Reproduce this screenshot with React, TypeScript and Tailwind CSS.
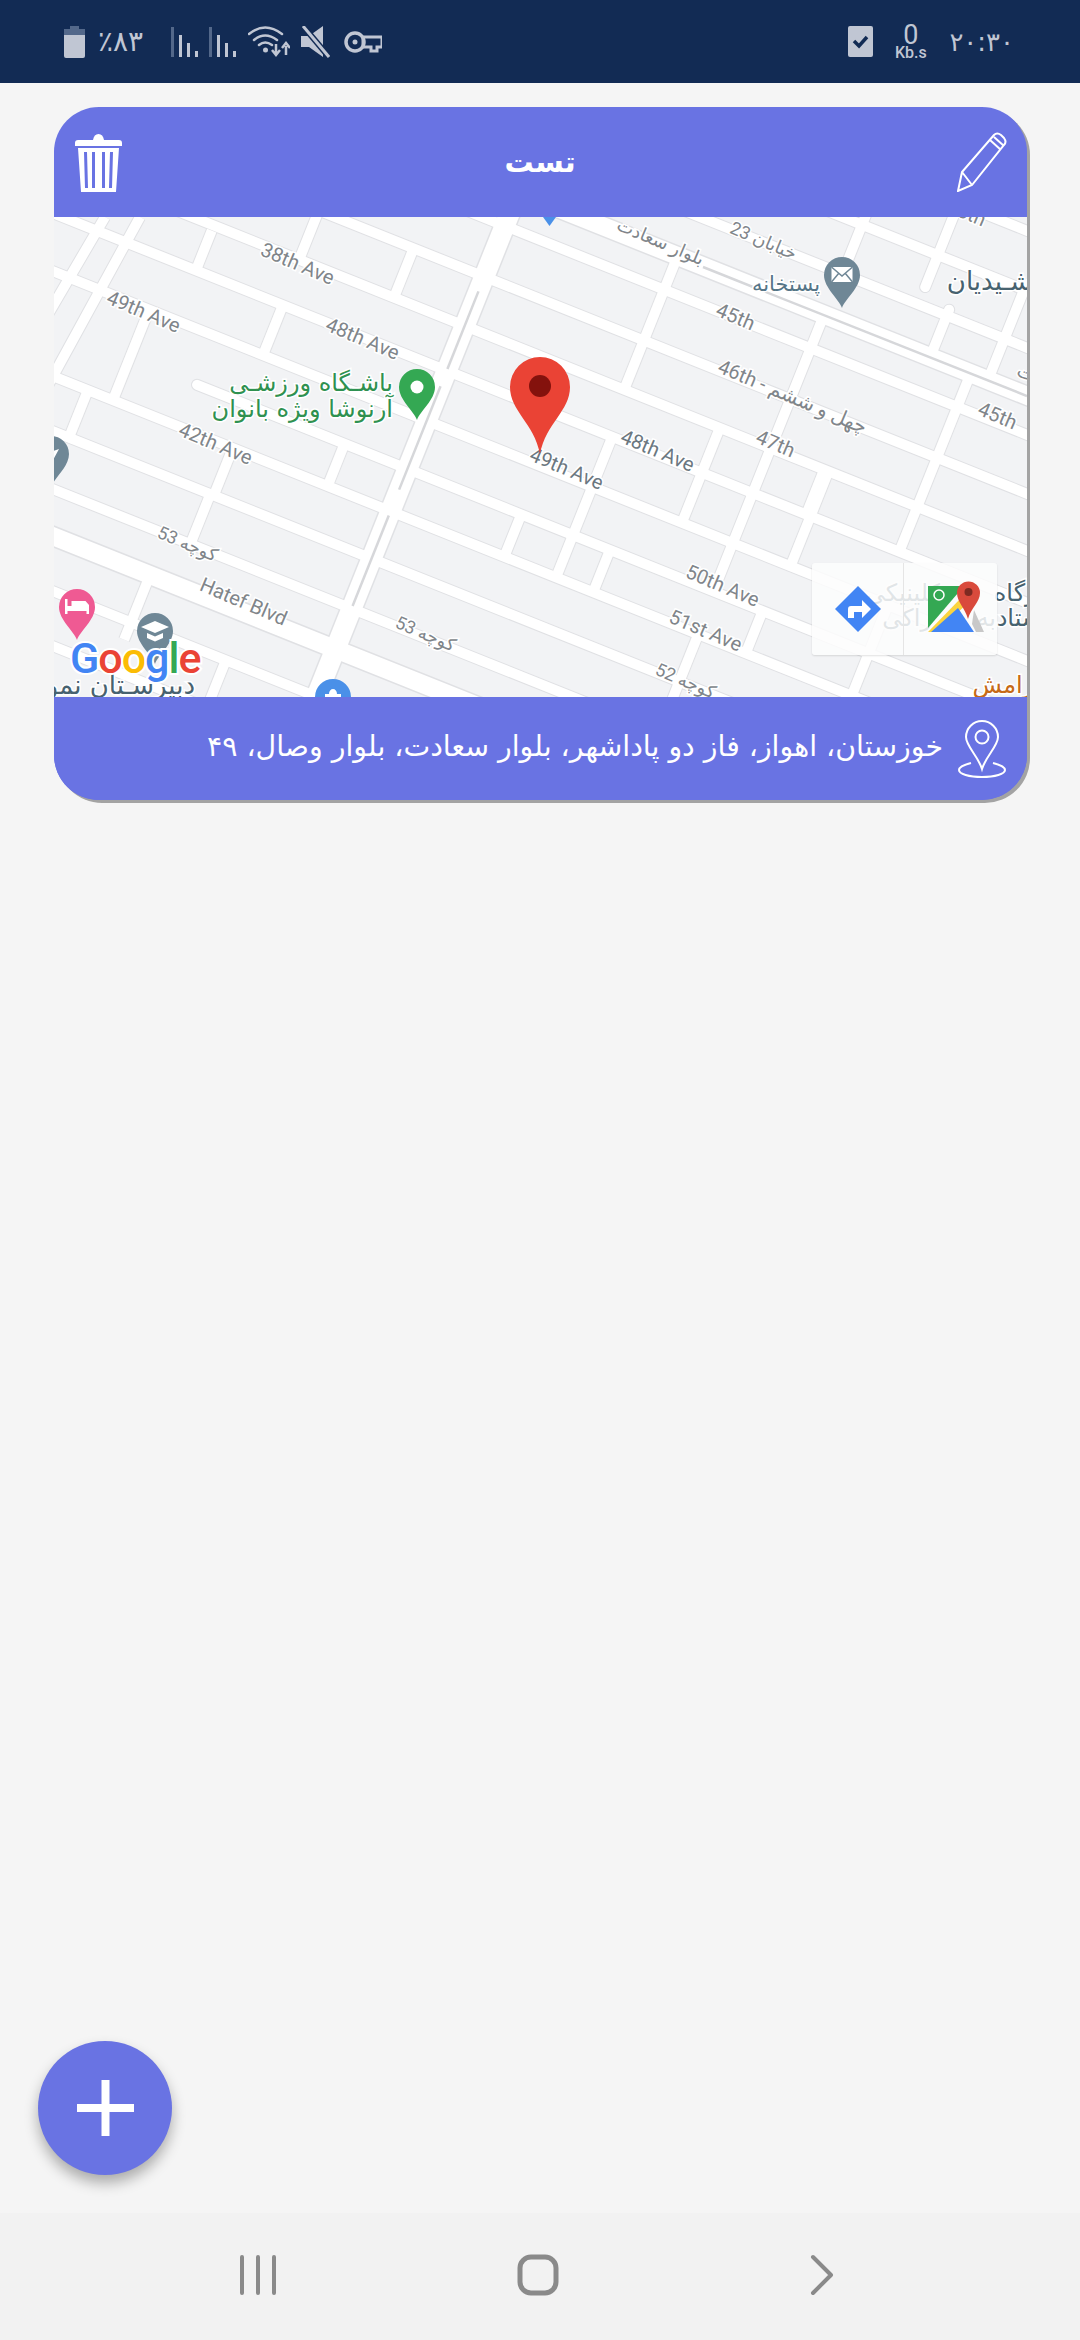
const fa = { fontFamily: '"DejaVu Sans", "Noto Sans", sans-serif' }

// long roads run at y = c + 0.4x, cross roads at x = d - 0.4y
const pt = (d: number, c: number) => {
  const x = (d - 0.4 * c) / 1.16
  return { x, y: c + 0.4 * x }
}

const longRoads = [-180, -120, -63, 24, 83, 140, 192, 250, 355, 410, 468, 570, 625, 680]
const crossRoads: [number, number, number][] = [
  [304, 146, 192], [403, 83, 140], [513, 83, 140], [405, 192, 250], [273, 250, 355],
  [244, 355, 415], [412, 355, 410], [522, 306, 355], [780, -15, 140], [787, 192, 355],
  [891, 140, 250], [950, -15, 306], [952, 355, 430], [952, -190, -63], [1140, -130, -15],
  [1120, -15, 192], [1130, 250, 355], [1012, 140, 192], [1017, 140, 250], [1007, 306, 355],
  [830, 306, 355], [727, 306, 355], [380, 515, 590], [408, 410, 468], [490, 570, 630],
]
const deadEnds: [number, number, number][] = [[1040, -200, -83], [1073, -70, -15]]

const streetLabels: [string, number, number, string?][] = [
  ['38th Ave', 297, 265], ['49th Ave', 143, 313], ['48th Ave', 362, 340], ['42th Ave', 215, 445],
  ['49th Ave', 566, 470, '#6b7780'], ['48th Ave', 657, 452, '#6b7780'], ['45th', 735, 318],
  ['47th', 775, 445], ['45th', 997, 417], ['Hatef Blvd', 243, 603], ['50th Ave', 722, 587],
  ['51st Ave', 705, 632], ['46th - چهل و ششم', 792, 398], ['بلوار سعادت', 660, 243],
  ['خیابان 23', 763, 242], ['کوچه 53', 187, 545], ['کوچه 53', 425, 635], ['کوچه 52', 685, 682],
  ['45th', 966, 214], ['بلوار سعادت', 1060, 389],
]

function Pin({ x, y, color, children }: { x: number; y: number; color: string; children?: React.ReactNode }) {
  return (
    <g transform={`translate(${x} ${y})`}>
      <path d="M0 33C-3 24-18 13-18 0a18 18 0 0 1 36 0C18 13 3 24 0 33z" fill={color} />
      {children}
    </g>
  )
}

function MapDrawing() {
  return (
    <svg viewBox="54 217 973 480" className="absolute inset-0 w-full h-full">
      <rect x="54" y="217" width="973" height="480" fill="#f2f3f5" />
      {/* block outlines */}
      <g stroke="#e0e1e4" strokeWidth="12">
        {longRoads.map((c) => (
          <line key={c} x1="0" y1={c} x2="1100" y2={c + 440} />
        ))}
        {crossRoads.map(([d, a, b], i) => (
          <line key={i} x1={pt(d, a).x} y1={pt(d, a).y} x2={pt(d, b).x} y2={pt(d, b).y} />
        ))}
        <line x1={pt(351, 306).x} y1={pt(351, 306).y} x2="1100" y2="746" strokeLinecap="round" />
        <path d="M140 217L40 400M105 217L30 345" fill="none" />
        {deadEnds.map(([d, a, b], i) => (
          <line key={i} x1={pt(d, a).x} y1={pt(d, a).y} x2={pt(d, b).x} y2={pt(d, b).y} strokeLinecap="round" />
        ))}
        <line x1="0" y1="-15" x2="1100" y2="425" strokeWidth="21" />
        <line x1="0" y1="515" x2="1100" y2="955" strokeWidth="21" />
        <line x1={pt(595, -60).x} y1={pt(595, -60).y} x2={pt(595, 720).x} y2={pt(595, 720).y} strokeWidth="23" />
      </g>
      <g stroke="#ffffff" strokeWidth="10">
        {longRoads.map((c) => (
          <line key={c} x1="0" y1={c} x2="1100" y2={c + 440} />
        ))}
        {crossRoads.map(([d, a, b], i) => (
          <line key={i} x1={pt(d, a).x} y1={pt(d, a).y} x2={pt(d, b).x} y2={pt(d, b).y} />
        ))}
        <line x1={pt(351, 306).x} y1={pt(351, 306).y} x2="1100" y2="746" strokeLinecap="round" />
        <path d="M140 217L40 400M105 217L30 345" fill="none" />
        {deadEnds.map(([d, a, b], i) => (
          <line key={i} x1={pt(d, a).x} y1={pt(d, a).y} x2={pt(d, b).x} y2={pt(d, b).y} strokeLinecap="round" />
        ))}
        <line x1="0" y1="-15" x2="1100" y2="425" strokeWidth="18" />
        <line x1="0" y1="515" x2="1100" y2="955" strokeWidth="18" />
        <line x1={pt(595, -60).x} y1={pt(595, -60).y} x2={pt(595, 720).x} y2={pt(595, 720).y} strokeWidth="20" />
      </g>
      {/* road dividers */}
      <g stroke="#d6d7da" strokeWidth="2.5">
        <line x1="703" y1="267" x2="1027" y2="396" />
        <line x1={pt(595, 100).x} y1={pt(595, 100).y} x2={pt(595, 190).x} y2={pt(595, 190).y} />
        <line x1={pt(595, 210).x} y1={pt(595, 210).y} x2={pt(595, 330).x} y2={pt(595, 330).y} />
        <line x1={pt(595, 360).x} y1={pt(595, 360).y} x2={pt(595, 465).x} y2={pt(595, 465).y} />
      </g>

      {/* street names */}
      {streetLabels.map(([t, x, y, color], i) => (
        <text
          key={i}
          transform={`translate(${x} ${y}) rotate(23)`}
          textAnchor="middle"
          dominantBaseline="middle"
          fontSize={/[a-z]/i.test(t) ? 20 : 18}
          fontFamily={'Roboto, "DejaVu Sans", sans-serif'}
          fill={color ?? '#80858a'}
          stroke="#ffffff"
          strokeWidth="3"
          paintOrder="stroke"
        >
          {t}
        </text>
      ))}

      {/* places */}
      <g fontFamily={'"DejaVu Sans", sans-serif'} textAnchor="end" stroke="#ffffff" strokeWidth="3" paintOrder="stroke">
        <text x="393" y="391" fontSize="24" fill="#2f9150">باشـگاه ورزشـی</text>
        <text x="393" y="417" fontSize="24" fill="#2f9150">آرنوشا ویژه بانوان</text>
        <text x="820" y="291" fontSize="21" fill="#557587">پستخانه</text>
        <text x="1032" y="290" fontSize="26" fill="#47626f">شـیدیان</text>
        <text x="1045" y="601" fontSize="24" fill="#47626f">برگاه</text>
        <text x="1042" y="626" fontSize="24" fill="#47626f">ستاد</text>
        <text x="195" y="694" fontSize="26" fill="#47626f">دبیرسـتان نمونه</text>
        <text x="1041" y="693" fontSize="24" fill="#c66a17">آرامش</text>
        <text x="940" y="601" fontSize="24" fill="#47626f">کلینیکی</text>
        <text x="932" y="626" fontSize="24" fill="#47626f">راکی</text>
        <text x="996" y="626" fontSize="24" fill="#47626f">به</text>
      </g>

      <Pin x={417} y={387} color="#34a853">
        <circle r="6.5" fill="#ffffff" />
      </Pin>
      <Pin x={842} y={275} color="#6f8796">
        <rect x="-10.5" y="-8" width="21" height="15" fill="#ffffff" />
        <path d="M-10.5-8L0 1 10.5-8M-10.5 7L-3-2M10.5 7L3-2" fill="none" stroke="#6f8796" strokeWidth="1.5" />
      </Pin>
      <Pin x={51} y={454} color="#6f8796">
        <path d="M8-5L-6 0l5 2 2 6z" fill="#ffffff" />
      </Pin>
      <Pin x={77} y={607} color="#ef5a93">
        <path d="M-12-8h2.500v7h4v-5h14l3.500 4v9h-2.500v-3h-19v3h-2.500z" fill="#ffffff" />
      </Pin>
      <Pin x={155} y={631} color="#6f8796">
        <path d="M0-10l14 6-14 6-14-6zM-8 2l8 3.500 8-3.500v5l-8 3.500-8-3.500z" fill="#ffffff" />
      </Pin>
      <Pin x={333} y={697} color="#4a90e8">
        <path d="M-8-3h16v5h-16zM-4-3a4 5 0 0 1 8 0" fill="#ffffff" />
      </Pin>
      <path d="M543 217h13l-6.500 9z" fill="#4a90e8" />

      <text
        x="70"
        y="673"
        fontSize="43"
        fontWeight="500"
        letterSpacing="-1"
        fontFamily="Roboto, sans-serif"
        stroke="#ffffff"
        strokeWidth="4"
        paintOrder="stroke"
      >
        <tspan fill="#4285f4">G</tspan>
        <tspan fill="#ea4335">o</tspan>
        <tspan fill="#fbbc05">o</tspan>
        <tspan fill="#4285f4">g</tspan>
        <tspan fill="#34a853">l</tspan>
        <tspan fill="#ea4335">e</tspan>
      </text>

      {/* selected location */}
      <path d="M540 454C534 423 510 411 510 387a30 30 0 0 1 60 0C570 411 546 423 540 454z" fill="#ea4335" />
      <circle cx="540" cy="386" r="11" fill="#84120d" />
    </svg>
  )
}

function MapButtons() {
  return (
    <div className="absolute left-[758px] top-[346px] flex w-[185px] h-[92px] rounded-[3px] bg-[#fdfdfd]/85 shadow-[0_1px_2px_rgba(0,0,0,0.12)]">
      <div className="flex w-[92px] items-center justify-center border-r border-[#e5e5e5]">
        <svg width="48" height="48" viewBox="0 0 48 48">
          <path d="M24 1l23 23-23 23L1 24z" fill="#4285f4" />
          <path d="M14 33V24q0-3 3-3h11v-6l9 9-9 9v-6H20v6z" fill="#ffffff" />
        </svg>
      </div>
      <div className="flex flex-1 items-center justify-center pl-[12px]">
        <svg width="58" height="58" viewBox="0 0 58 58">
          <path d="M0 6h36L0 48z" fill="#34a853" />
          <path d="M0 52l33-34 6 6L8 52z" fill="#fbd43f" />
          <path d="M3 52h43L30 28z" fill="#4285f4" />
          <path d="M46 30l10 22h-8l-4-8z" fill="#c8c8c8" />
          <path d="M40 39C37 28 29 22 29 13a11.500 11.500 0 0 1 23 0c0 9-9 15-12 26z" fill="#d94a3c" />
          <circle cx="40.500" cy="12" r="4" fill="#7e2a22" />
          <circle cx="11" cy="15" r="5" fill="none" stroke="#ffffff" strokeWidth="1.500" />
        </svg>
      </div>
    </div>
  )
}

function Signal({ className }: { className: string }) {
  return (
    <svg className={className} width="28" height="30" viewBox="0 0 28 30">
      <rect x="0" y="0" width="3" height="30" fill="#53688a" />
      <rect x="8" y="8" width="3" height="22" fill="#c0c6d3" />
      <rect x="16" y="16" width="3" height="14" fill="#c0c6d3" />
      <rect x="24" y="24" width="3" height="6" fill="#c0c6d3" />
    </svg>
  )
}

function StatusBar() {
  return (
    <div className="flex h-[83px] shrink-0 items-center justify-between bg-[#122b54] pl-[64px] pr-[66px] text-[#c0c6d3]">
      <div className="flex items-center">
        <svg width="21" height="32" viewBox="0 0 21 32">
          <path d="M6 0h9v3h6v6H0V3h6z" fill="#53688a" />
          <path d="M0 9h21v21q0 2-2 2H2q-2 0-2-2z" fill="#c0c6d3" />
        </svg>
        <span className="ml-[13px] w-[50px] text-[28px] leading-none" style={fa}>٪۸۳</span>
        <Signal className="ml-[23px]" />
        <Signal className="ml-[10px]" />
        <svg className="ml-[11px]" width="42" height="32" viewBox="0 0 42 32">
          <g fill="none" stroke="#c0c6d3" strokeWidth="2.500" strokeLinecap="round">
            <path d="M1 8q16-13 33 0M6 14q11-9 23 0M11 19q6-5 13 0" />
          </g>
          <circle cx="17.500" cy="24" r="2.500" fill="#c0c6d3" />
          <path d="M28 18v9M24 24l4 5 4-5M38 29v-9M34 22l4-5 4 5" fill="none" stroke="#c0c6d3" strokeWidth="2.500" />
        </svg>
        <svg className="ml-[11px]" width="29" height="32" viewBox="0 0 29 32">
          <path d="M0 10h8L22 0v31L8 21H0z" fill="#c0c6d3" />
          <path d="M2 0l26 31" stroke="#122b54" strokeWidth="6" />
          <path d="M2 0l26 31" stroke="#c0c6d3" strokeWidth="3" />
        </svg>
        <svg className="ml-[14px]" width="38" height="22" viewBox="0 0 38 22">
          <circle cx="11" cy="11" r="9" fill="none" stroke="#c0c6d3" strokeWidth="3.500" />
          <circle cx="11" cy="11" r="2.500" fill="#c0c6d3" />
          <path d="M19 6h19v10h-5v4h-6v-4h-8z" fill="none" stroke="#c0c6d3" strokeWidth="3" />
        </svg>
      </div>
      <div className="flex items-center">
        <svg width="25" height="31" viewBox="0 0 25 31">
          <rect width="25" height="31" rx="2" fill="#c0c6d3" />
          <path d="M6 15l5 5 8-9" fill="none" stroke="#122b54" strokeWidth="3.500" />
        </svg>
        <div className="ml-[21px] flex w-[33px] flex-col items-center leading-none font-['Roboto',sans-serif]">
          <span className="text-[27px] leading-[22px]">0</span>
          <span className="text-[16px] leading-[14px] font-medium">Kb.s</span>
        </div>
        <span dir="ltr" className="ml-[22px] text-[26px] leading-none" style={fa}>۲۰:۳۰</span>
      </div>
    </div>
  )
}

export default function App() {
  return (
    <div className="relative flex h-[2340px] w-[1080px] flex-col overflow-hidden bg-[#f5f5f5]">
      <StatusBar />
      <div className="flex-1 pl-[54px] pt-[24px]">
        <div className="w-[973px] overflow-hidden rounded-[45px] bg-[#6973e3] shadow-[3px_3px_0_#a3a3a3]">
          <div className="flex h-[110px] items-center justify-between pl-[20px] pr-[20px]">
            <svg width="49" height="59" viewBox="0 0 49 59">
              <path d="M1 10q0-3 3-3h15q1-6 5.500-6t5.500 6h15q3 0 3 3v3H1z" fill="#ffffff" />
              <path fillRule="evenodd" d="M4 15h41l-3 44H7zM10 19l1 36h3l-1-36zM18 19v36h3V19zM28 19v36h3V19zM36 19l-1 36h3l1-36z" fill="#ffffff" />
            </svg>
            <span className="text-[29px] font-bold leading-none text-white" style={fa}>تست</span>
            <svg width="50" height="60" viewBox="0 0 50 60" fill="none" stroke="#ffffff" strokeWidth="2">
              <path d="M1 59l4-19L37 3q3-3 7 0l3 3q3 4 0 7L15 53zM5 40l10 13M33 8l11 10M37 5l10 9" />
            </svg>
          </div>
          <div className="relative h-[480px] overflow-hidden">
            <MapDrawing />
            <MapButtons />
          </div>
          <div className="flex h-[103px] items-center justify-end bg-[#6973e3] pr-[21px]">
            <span dir="rtl" className="pb-[2px] text-[28.4px] leading-none text-white" style={fa}>
              خوزستان، اهواز، فاز دو پاداشهر، بلوار سعادت، بلوار وصال، ۴۹
            </span>
            <svg className="ml-[15px]" width="48" height="58" viewBox="0 0 48 58" fill="none" stroke="#ffffff" strokeWidth="2">
              <path d="M24 49C20 36 8 26 8 17a16 16 0 0 1 32 0c0 9-12 19-16 32z" />
              <circle cx="24" cy="17" r="6.500" />
              <path d="M13 43C5 45 1 47 1 50c0 4 10 7 23 7s23-3 23-7c0-3-4-5-12-7" />
            </svg>
          </div>
        </div>
      </div>
      <button className="absolute left-[38px] top-[2041px] flex h-[134px] w-[134px] items-center justify-center rounded-full bg-[#6973e3] shadow-[0_8px_14px_rgba(0,0,0,0.3)]">
        <svg width="57" height="56" viewBox="0 0 57 56">
          <path d="M24.500 0h8v24h24.500v8H32.500v24h-8V32H0v-8h24.500z" fill="#ffffff" />
        </svg>
      </button>
      <div className="flex h-[127px] shrink-0 items-start bg-[#f2f2f2] pl-[239px] pt-[41px]">
        <svg width="38" height="42" viewBox="0 0 38 42" stroke="#8a8a8a" strokeWidth="4" strokeLinecap="round">
          <path d="M3 3v36M19 3v36M35 3v36" />
        </svg>
        <svg className="ml-[240px]" width="42" height="42" viewBox="0 0 42 42" fill="none" stroke="#8a8a8a" strokeWidth="5">
          <rect x="3" y="3" width="36" height="36" rx="11" />
        </svg>
        <svg className="ml-[251px]" width="24" height="42" viewBox="0 0 24 42" fill="none" stroke="#8a8a8a" strokeWidth="4" strokeLinecap="round" strokeLinejoin="round">
          <path d="M3 3l18 18L3 39" />
        </svg>
      </div>
    </div>
  )
}
